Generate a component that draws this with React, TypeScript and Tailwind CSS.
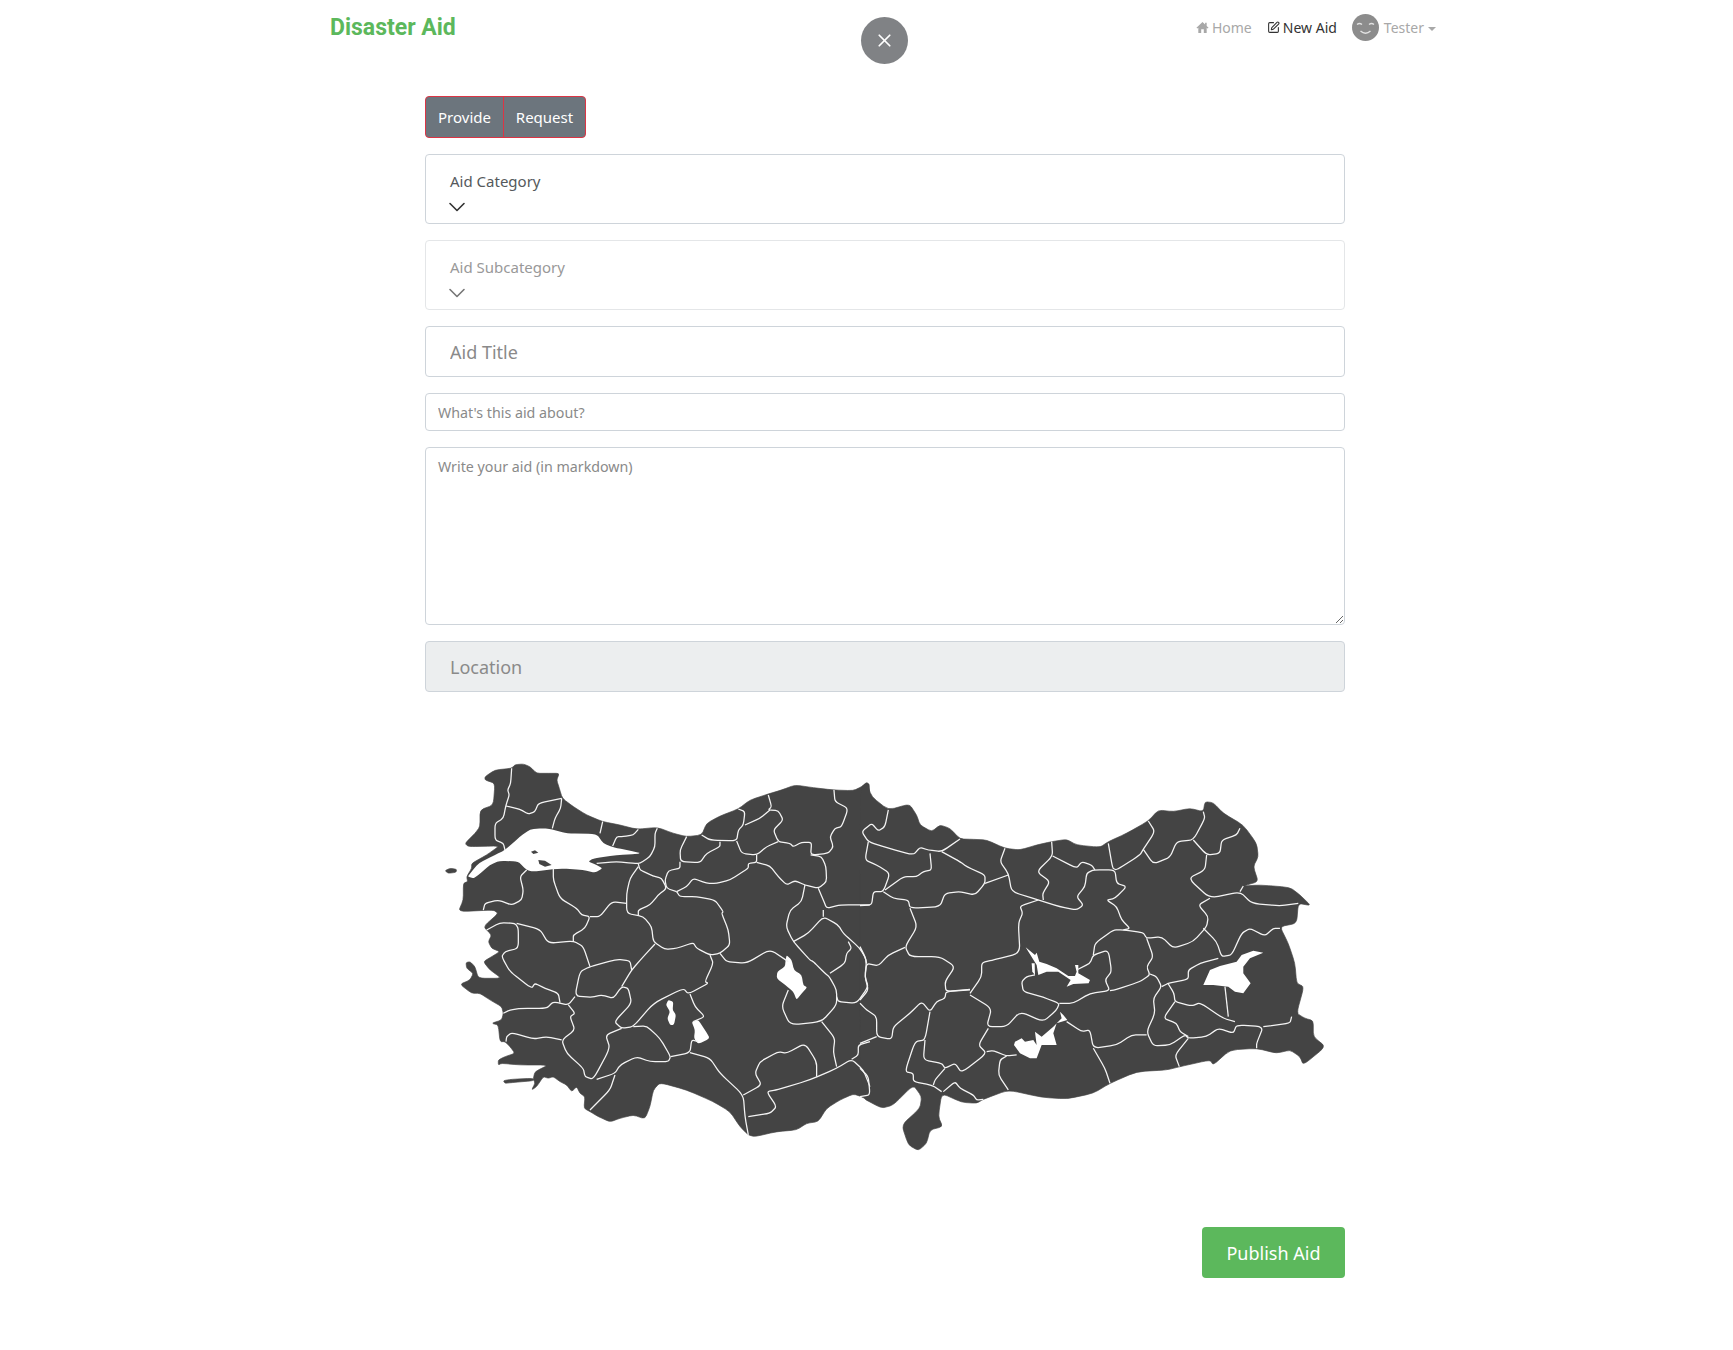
import React from 'react';
import { ChevronDown, SquarePen, X } from 'lucide-react';

// map is traced in two pieces, each with its own origin (3 units = 1px)
const WEST_LAND = [
  '275,85 285,74 310,72 330,80 350,100 385,100 418,100 410,120 418,145 427,175 460,200 500,225 548,245 600,255 650,268 712,262 760,280 800,290 845,285 860,250 900,228 955,207 990,180 1045,162 1085,150 1125,135 1180,143 1240,150 1300,152 1325,140 1340,127 1350,135 1350,1085 1325,1070 1300,1062 1260,1080 1220,1105 1195,1145 1160,1150 1130,1170 1070,1175 1005,1190 985,1185 960,1160 930,1115 880,1085 800,1050 720,1028 700,1050 690,1100 675,1137 640,1125 600,1135 570,1146 535,1130 510,1115 492,1105 495,1070 480,1060 470,1040 455,1055 440,1035 420,1025 400,1010 385,1015 370,1010 350,1040 335,1050 345,1030 340,1015 345,995 385,975 300,975 245,970 235,975 235,960 255,950 285,940 270,920 255,905 240,905 235,855 215,850 245,840 250,820 245,800 210,780 180,760 155,760 120,733 150,720 160,700 140,685 138,668 150,665 165,680 175,715 245,715 210,690 190,665 215,650 240,635 215,625 205,605 215,585 190,560 235,520 220,510 115,515 130,480 130,430 143,425 140,410 155,385 155,370 200,345 235,320 225,318 145,320 135,310 165,280 180,260 180,210 220,195 225,130 195,120 195,110 225,90',
  '250,1022 275,1018 340,1015 342,1022 275,1028 255,1030',
  '75,392 90,385 110,388 108,397 85,400',
];

const WEST_WATER = [
  '255,330 300,290 330,268 370,265 395,268 440,280 530,282 550,310 580,322 660,338 655,342 590,345 520,355 505,365 530,375 548,385 525,398 490,390 420,385 340,395 320,390 295,365 240,362 210,375 175,405 160,415 143,410 155,395 175,370 225,345',
  '1100,645 1115,660 1122,690 1145,705 1150,735 1162,742 1145,760 1130,780 1120,755 1095,735 1070,715 1072,695 1095,680 1097,660',
  '745,780 760,785 758,810 768,825 762,855 750,855 742,835 750,815 738,795',
  '815,845 835,840 855,870 870,895 835,912 822,895 825,870',
];

const WEST_ISLANDS = ['333,335 345,331 355,338 340,342', '355,360 375,362 395,375 375,380 358,372'];

const WEST_LINES = [
  '275,85 272,130 263,150 268,165 258,195 250,235 225,250 225,300 250,310 255,330',
  '258,198 300,208 325,222 345,215 355,190 425,175',
  '425,175 422,205 405,235 397,265',
  '548,245 540,280',
  '655,268 640,285 610,290 590,290 578,318',
  '712,265 705,280 705,320 690,350 660,370 640,370 590,365 530,370',
  '800,290 780,330 782,365 840,368 860,340 900,320 900,305',
  '845,285 870,300 950,303 955,270 970,255 975,215 955,207',
  '1045,165 1055,200 1045,210 1075,212 1090,240 1060,270 1075,305 1110,310 1120,320 1145,307 1175,307 1172,345 1225,340 1240,320 1230,290 1245,265 1265,260 1285,205 1245,185 1242,150',
  '975,255 1020,235 1050,210',
  '950,303 965,340 1010,345 1040,320 1075,305',
  '1010,345 1010,367 985,370 985,385 930,420 890,430 860,430 820,415 800,440 770,455',
  '780,365 780,385 745,392 735,420 740,445 770,455',
  '655,372 660,390 700,408 725,415 740,445 715,465 690,495 655,510 655,525',
  '655,380 630,415 620,460 620,520 670,530 695,560 700,605 735,628 770,625 820,608 830,625 870,645 900,640 930,615 925,570 905,520 910,515 885,480 830,470 780,470 770,455',
  '1010,367 1050,378 1075,410 1100,435 1125,422 1155,435 1195,445 1220,425 1218,380 1205,350 1172,345',
  '1155,435 1145,485 1110,510 1098,560 1120,605 1170,660 1180,665 1215,700 1228,710 1250,750 1250,795 1205,845 1110,855 1085,800 1105,750',
  '1120,605 1165,580 1210,530 1255,555 1270,580 1320,625 1340,660 1335,710 1345,740 1310,790 1255,785 1250,770',
  '1195,445 1210,480 1220,505 1260,495 1350,495',
  '1210,510 1210,530',
  '1285,605 1295,625 1280,640 1275,670 1230,700',
  '900,640 920,665 980,670 1050,628 1105,665',
  '870,645 880,670 855,725 865,730 805,762 790,745 700,790 640,860 605,865 583,845 635,790 625,745 605,740 580,775 545,765 515,772 465,768 480,695 510,680 590,658 630,662 635,690',
  '705,612 670,650 635,690 605,740',
  '465,770 445,795 400,785 380,805 300,805 270,810 250,820',
  '420,788 415,760 375,745 345,730 335,745 270,695 245,650 255,635 295,625 295,565 285,550 240,548 200,570',
  '290,550 360,568 385,610 460,603 490,620 510,680',
  '460,603 460,585 495,565 510,530 485,525 470,505 420,475 400,420 400,385',
  '510,530 540,530 575,485 620,490',
  '320,390 300,410 310,450 305,480 275,495 235,480 195,490 190,510',
  '445,795 465,820 450,830 465,870 425,900 440,940 490,985 495,1010 520,1018 570,925 557,885 605,865',
  '640,860 680,858 720,895 752,950 745,965 690,965 650,950 600,975 585,1000 530,1018',
  '752,950 810,938 815,900 835,905',
  '810,762 825,800 855,830 820,845',
  '810,938 870,955 900,1000 970,1065 975,1130 985,1185',
  '425,900 380,890 340,897 275,878 260,890 258,905',
  '585,1005 570,1050 510,1110',
  '970,1065 1025,1035 1005,1000 1020,965 1075,935 1100,940 1155,910 1190,965 1190,1010',
  '985,1130 1050,1120 1070,1100 1040,1055 1070,1050 1170,1020 1250,985 1295,958 1330,990 1350,1040',
  '1205,845 1245,895 1240,935 1250,980',
  '1295,958 1315,945 1315,915 1350,905',
];

const EAST_LAND =
  '0,85 20,68 35,110 85,150 148,132 170,165 180,195 215,215 240,195 270,205 300,237 340,238 380,240 435,265 480,270 530,255 575,245 620,238 650,255 720,262 745,245 800,220 865,183 895,150 940,155 990,145 1030,155 1035,125 1060,128 1090,160 1150,195 1190,250 1195,290 1180,320 1195,365 1150,378 1200,375 1290,382 1320,405 1353,437 1315,430 1310,490 1260,500 1285,550 1305,610 1310,670 1332,680 1310,760 1335,775 1360,782 1360,830 1397,860 1330,915 1320,890 1290,870 1250,880 1190,865 1110,870 1060,915 1050,900 960,920 920,930 830,935 750,970 700,1000 620,1017 545,1012 445,990 370,1018 350,1030 305,1027 245,1000 235,1070 248,1100 210,1110 200,1150 175,1172 145,1155 125,1095 180,1045 185,1010 160,975 100,1035 65,1045 0,1010';

const EAST_WATER = [
  '497,562 525,585 530,578 538,605 560,612 590,625 625,648 645,648 650,635 645,615 655,615 655,640 690,660 686,670 640,672 620,680 632,660 595,635 560,635 535,645 530,615',
  '515,610 524,610 525,645 517,635',
  '465,845 485,835 495,845 520,840 530,855 525,815 545,830 580,800 605,775 600,755 610,765 622,780 590,790 580,820 590,855 545,855 530,895 510,895 480,880 462,855',
  '1030,675 1050,630 1080,618 1130,605 1145,585 1180,572 1210,578 1170,595 1150,620 1150,640 1172,670 1150,700 1125,695 1105,680 1060,675',
];

const EAST_LINES = [
  '85,150 75,200 55,213 35,190 5,215 25,245 85,265 160,285 180,262 205,270 245,275 300,237',
  '25,245 15,300 50,315 90,340 70,395 40,395 35,435 0,437',
  '70,395 100,415 145,420 150,445 240,440 255,400 300,395 345,405 375,370 375,345 320,320 300,305 245,275',
  '210,280 215,330 190,335 170,350 130,350 75,390',
  '375,370 445,345',
  '435,265 420,305 445,340 455,395 535,420 600,440 650,450 670,435 650,410 675,380 680,340 700,330 765,330 770,370 800,380 765,415 740,420 770,440 785,480 810,505 790,510',
  '575,245 578,288 530,335 570,365 548,400 550,420',
  '578,288 650,325 665,305 695,315 705,330',
  '745,250 758,325 770,330 840,285 850,268 885,215 865,183',
  '850,268 880,312 930,292 950,245 1000,240 1035,175 1030,155',
  '1000,240 1040,285 1080,280 1085,240 1130,225 1140,205',
  '1040,285 1035,330 985,355 1050,415 1140,395 1175,430 1260,438 1315,430',
  '1140,395 1150,378',
  '1050,415 1015,435 1045,470 1040,500 1000,545 940,565 905,530 860,535 850,518 790,510 760,510 705,550 700,585',
  '1030,505 1070,545 1085,590 1115,585 1145,520 1170,505 1215,528 1240,505 1260,505',
  '535,420 480,438 488,460 475,490 480,580 400,600 365,608 365,650 330,700',
  '150,445 172,500 135,560 150,590 240,590 285,620 255,665 258,695 330,688',
  '135,562 85,585 55,618 20,610 15,650 25,690 0,720',
  '0,560 15,590 20,610',
  '330,705 395,745 380,800 440,800 480,755 550,785 590,750 598,730 550,712 490,695 485,665 500,650 525,645',
  '598,730 640,730 690,700 750,692 735,660 755,635 745,570 700,585 690,610 650,630',
  '750,692 765,690 840,665 870,645 860,620 880,590 860,535',
  '870,642 890,650 905,680 880,715 885,760 860,815 880,858 930,855 975,825 985,835 1040,830 1075,805 1120,820 1130,795 1210,800 1190,850 1190,865',
  '1210,800 1290,790 1295,770',
  '905,680 925,670 985,658 985,630 1020,610 1075,595',
  '925,672 942,700 945,725 995,738 1020,728 1090,775 1125,785',
  '945,725 910,775 950,790 960,815 985,830',
  '1095,680 1105,770',
  '985,835 945,885 958,920',
  '860,825 815,825 770,855 700,865 690,810 665,815 620,785',
  '700,865 735,925 750,970',
  '330,690 258,695 255,715 230,725 210,755 185,725 150,760 100,800 95,838 50,830 50,770 20,750 0,730',
  '50,830 0,850',
  '210,755 195,840 165,845 135,935 160,940 160,965 215,975 245,995',
  '195,840 190,900 245,910 255,925 285,910 305,938 380,880 355,855 385,805',
  '255,925 225,960 220,975',
  '380,875 400,872 440,888 470,885',
  '440,888 420,900 415,945 445,990',
  '250,995 285,965 300,985 340,1005 350,1020 370,1018',
  '0,925 25,950 30,1005 0,1010',
];

// rounds only the tip of each corner, so the traced shape stays put
const CORNER = 0.28;

const smooth = (points: string, closed = false) => {
  const pts = points.split(' ').map((p) => p.split(',').map(Number));
  const toward = (a: number[], b: number[]) => `${a[0] + (b[0] - a[0]) * CORNER},${a[1] + (b[1] - a[1]) * CORNER}`;
  const n = pts.length;
  let d = closed ? `M${toward(pts[0], pts[n - 1])}` : `M${pts[0][0]},${pts[0][1]}`;
  const from = closed ? 0 : 1;
  const to = closed ? n : n - 1;
  for (let i = from; i < to; i++) {
    const p = pts[i];
    const prev = pts[(i + n - 1) % n];
    const next = pts[(i + 1) % n];
    d += ` L${toward(p, prev)} Q${p[0]},${p[1]} ${toward(p, next)}`;
  }
  return closed ? d + ' Z' : d + ` L${pts[n - 1][0]},${pts[n - 1][1]}`;
};

const TurkeyMap = () => (
  <svg viewBox="425 740 920 430" className="mt-12 block h-[430px] w-[920px]">
    <g transform="translate(420 740) scale(0.3333)">
      {WEST_LAND.map((p, i) => (
        <path key={i} d={smooth(p, true)} fill="#444444" stroke="#444444" strokeWidth="2" />
      ))}
    </g>
    <g transform="translate(860 760) scale(0.3333)">
      <path d={smooth(EAST_LAND, true)} fill="#444444" stroke="#444444" strokeWidth="2" />
    </g>
    <g transform="translate(420 740) scale(0.3333)">
      {WEST_WATER.map((p, i) => (
        <path key={i} d={smooth(p, true)} fill="#ffffff" />
      ))}
      {WEST_ISLANDS.map((p, i) => (
        <polygon key={i} points={p} fill="#444444" />
      ))}
      {WEST_LINES.map((p, i) => (
        <path key={i} d={smooth(p)} fill="none" stroke="#f4f4f4" strokeWidth="3.8" />
      ))}
    </g>
    <g transform="translate(860 760) scale(0.3333)">
      {EAST_WATER.map((p, i) => (
        <polygon key={i} points={p} fill="#ffffff" />
      ))}
      {EAST_LINES.map((p, i) => (
        <path key={i} d={smooth(p)} fill="none" stroke="#f4f4f4" strokeWidth="3.8" />
      ))}
    </g>
  </svg>
);

const HomeIcon = () => (
  <svg viewBox="0 0 14 14" className="h-[13px] w-[13px]" fill="#a8a8a8">
    <path d="M7 1 L0.5 7.2 L1.4 8.1 L2.5 7.2 V13 H5.6 V9 H8.4 V13 H11.5 V7.2 L12.6 8.1 L13.5 7.2 L11.5 5.3 V2 H9.8 V3.7 Z" />
  </svg>
);

const Avatar = () => (
  <svg viewBox="0 0 27 27" className="h-[27px] w-[27px]">
    <circle cx="13.5" cy="13.5" r="13.5" fill="#8c8c8c" />
    <path d="M5 10.5 Q7.5 8.5 10 10.5 M17 10.5 Q19.5 8.5 22 10.5" fill="none" stroke="#ffffff" strokeWidth="1.3" opacity="0.75" />
    <path d="M8.5 17 Q13.5 21.5 18.5 17" fill="none" stroke="#ffffff" strokeWidth="1.4" opacity="0.75" />
  </svg>
);

const Navbar = () => (
  <div className="flex h-[50px] items-start justify-between px-[15px]">
    <span className="mt-[12px] font-['Roboto'] text-[23px] leading-[32px] font-bold text-[#5cb85c]">Disaster Aid</span>
    <div className="mt-[14px] flex items-center pr-[4px] text-[14px] leading-[27px]">
      <span className="flex items-center gap-[3px] text-[#a8a8a8]">
        <HomeIcon /> Home
      </span>
      <span className="ml-[15px] flex items-center gap-[3px] text-[#333333]">
        <SquarePen size={13} strokeWidth={2} /> New Aid
      </span>
      <span className="ml-[15px]">
        <Avatar />
      </span>
      <span className="ml-[5px] flex items-center gap-[4px] text-[#a8a8a8]">
        Tester
        <span className="mt-[2px] border-x-[4px] border-t-[4px] border-x-transparent border-t-[#a8a8a8]" />
      </span>
    </div>
  </div>
);

const SelectBox = ({ label, disabled }: { label: string; disabled?: boolean }) => (
  <div className={`mt-4 h-[70px] rounded border px-[24px] pt-[14px] ${disabled ? 'border-[#e4e6e8] text-[#999999]' : 'border-[#ced4da] text-[#55595c]'}`}>
    <div className="text-[15px] leading-[24px]">{label}</div>
    <ChevronDown size={28} strokeWidth={1.4} className={`-ml-[7px] ${disabled ? 'text-[#777777]' : 'text-[#333333]'}`} />
  </div>
);

export default function App() {
  return (
    <div className="relative h-[1350px] w-full bg-white font-['Noto_Sans','Open_Sans',sans-serif]">
      <button className="absolute top-[17px] left-[861px] flex h-[47px] w-[47px] items-center justify-center rounded-full bg-[#808285] text-white">
        <X size={21} strokeWidth={2} />
      </button>
      <div className="ml-[315px] w-[1140px]">
        <Navbar />
        <div className="mt-[46px] ml-[110px] w-[920px]">
          <div className="flex h-[42px] w-[161px] overflow-hidden rounded border border-[#dc3545] bg-[#6c757d] text-[15px] text-white">
            <span className="flex w-[78px] items-center justify-center border-r border-[#dc3545]">Provide</span>
            <span className="flex flex-1 items-center justify-center">Request</span>
          </div>
          <SelectBox label="Aid Category" />
          <SelectBox label="Aid Subcategory" disabled />
          <input
            placeholder="Aid Title"
            className="mt-4 block h-[51px] w-full rounded border border-[#ced4da] px-[24px] text-[18px] outline-none placeholder:text-[#8a8a8a]"
          />
          <input
            placeholder="What's this aid about?"
            className="mt-4 block h-[38px] w-full rounded border border-[#ced4da] px-3 text-[14.25px] outline-none placeholder:text-[#8a8a8a]"
          />
          <textarea
            placeholder="Write your aid (in markdown)"
            className="mt-4 block h-[178px] w-full rounded border border-[#ced4da] px-3 py-2 text-[14.25px] outline-none placeholder:text-[#8a8a8a]"
          />
          <input
            disabled
            placeholder="Location"
            className="mt-4 block h-[51px] w-full rounded border border-[#ced4da] bg-[#eceeef] px-[24px] text-[18px] outline-none placeholder:text-[#8a8a8a]"
          />
          <TurkeyMap />
          <div className="mt-[57px] flex justify-end">
            <button className="h-[51px] w-[143px] rounded bg-[#5cb85c] pt-[1px] text-[18px] text-white">Publish Aid</button>
          </div>
        </div>
      </div>
    </div>
  );
}
